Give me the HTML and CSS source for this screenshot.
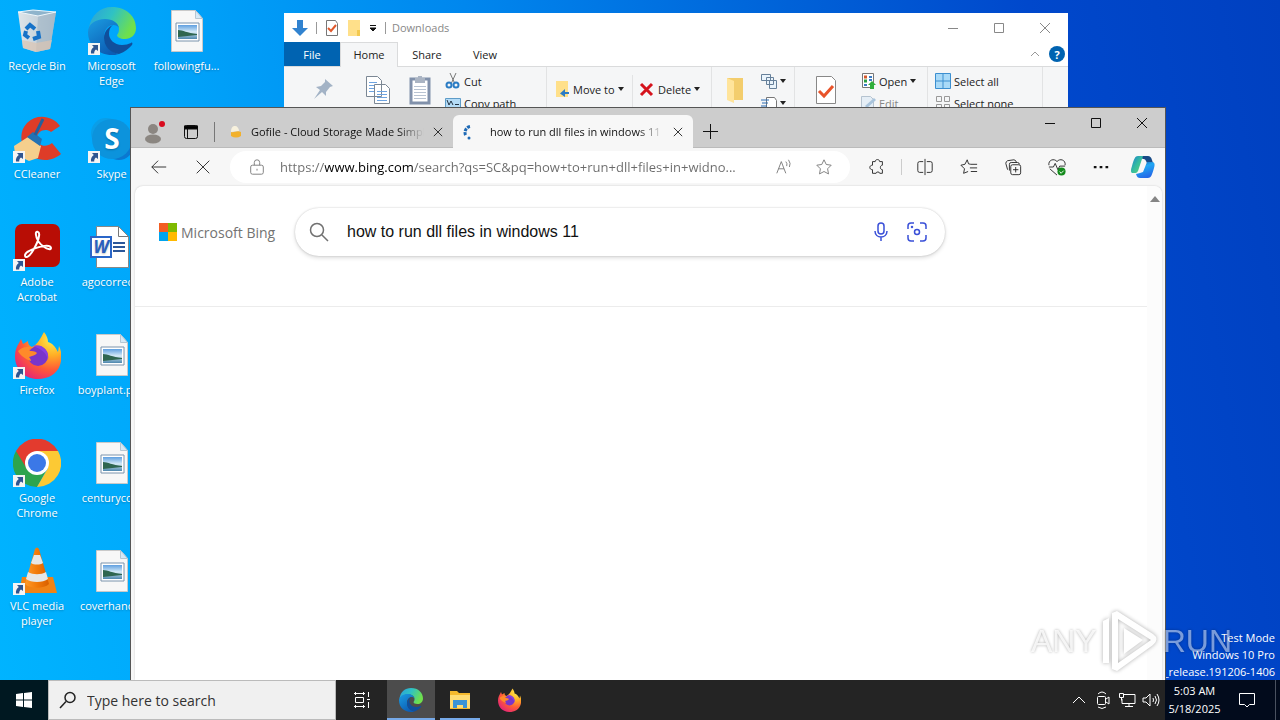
FILE: index.html
```
<!DOCTYPE html>
<html lang="en">
<head>
    <meta charset="utf-8">
    <meta name="viewport" content="width=device-width, initial-scale=1.0">
    <title>Desktop</title>
    <link rel="stylesheet" href="styles.css">
</head>
<body>
    <!-- Shared icons -->
    <svg class="defs" aria-hidden="true">
        <defs>
            <linearGradient id="edge-top" x1="0" y1="0" x2="1" y2="0.4">
                <stop offset="0" stop-color="#2b9fdc"/><stop offset="0.5" stop-color="#2fc2c4"/><stop offset="1" stop-color="#6fe04c"/>
            </linearGradient>
            <linearGradient id="edge-left" x1="0" y1="0" x2="0.6" y2="1">
                <stop offset="0" stop-color="#1b9de2"/><stop offset="1" stop-color="#0c5db4"/>
            </linearGradient>
            <radialGradient id="fox" cx="0.8" cy="0.15" r="1">
                <stop offset="0" stop-color="#fff04f"/><stop offset="0.35" stop-color="#ffae25"/><stop offset="0.65" stop-color="#ff5b36"/><stop offset="1" stop-color="#e3207c"/>
            </radialGradient>
            <linearGradient id="cone" x1="0" y1="0" x2="1" y2="0">
                <stop offset="0" stop-color="#ff9a2a"/><stop offset="0.5" stop-color="#f27a0a"/><stop offset="1" stop-color="#d85f00"/>
            </linearGradient>
            <linearGradient id="photo" x1="0" y1="0" x2="0" y2="1">
                <stop offset="0" stop-color="#5f9fe0"/><stop offset="0.5" stop-color="#d6ebf7"/><stop offset="1" stop-color="#4d86ad"/>
            </linearGradient>
            <linearGradient id="bin" x1="0" y1="0" x2="1" y2="0">
                <stop offset="0" stop-color="#dfe5e9"/><stop offset="1" stop-color="#b3c3cf"/>
            </linearGradient>
            <linearGradient id="copilot-a" x1="0" y1="0" x2="1" y2="1">
                <stop offset="0" stop-color="#1a7fd0"/><stop offset="0.5" stop-color="#35bda0"/><stop offset="1" stop-color="#63d36e"/>
            </linearGradient>
            <linearGradient id="copilot-b" x1="0" y1="0" x2="0.4" y2="1">
                <stop offset="0" stop-color="#1556a8"/><stop offset="0.4" stop-color="#20a8f4"/><stop offset="1" stop-color="#246be8"/>
            </linearGradient>
        </defs>
        <symbol id="shortcut" viewBox="0 0 12 12">
            <path d="M0 0h12v12H0z" fill="#f4f4f4"/>
            <path d="M4 2h6v6L8 6.4C6.6 7.300 6.200 8.600 6.200 10.500H3C2.600 7.500 3.700 5.400 5.800 4z" fill="#2f5590"/>
        </symbol>
        <symbol id="edge" viewBox="0 0 48 48">
            <path d="M1 21C3 8 12 0 24 0c15 0 24 10 24 21 0 7-5 11-11 11-5 0-8-2-8-4 1-1 2-3 2-6 0-5-5-9-12-9C10 13 4 17 1 21z" fill="url(#edge-top)"/>
            <path d="M0 25c0-8 8-13 17-13 8 0 13 4 14 9-1-2-3-3-6-3-5 0-9 5-9 12 0 8 6 15 15 17-3 1-5 1-7 1C10 48 0 38 0 25z" fill="url(#edge-left)"/>
            <path d="M25 18c-5 2-9 7-9 13 0 8 6 15 15 16 6-2 10-6 13-9 1-2 0-3-1-2-3 1-5 2-9 2-8 0-13-6-13-11 0-4 1-7 4-9z" fill="#104f9c"/>
        </symbol>
        <symbol id="firefox" viewBox="0 0 48 48">
            <path d="M31 1c3 4 4 7 4 10 4 1 7 4 10 10l1-6c3 6 3 13 1 19-3 9-12 14-22 14C11 48 2 38 2 25c0-6 2-10 4-13l2-4 2 5 5-3c0 3 1 5 4 6 6-3 8-8 12-15z" fill="url(#fox)"/>
            <circle cx="25" cy="25" r="10" fill="#7a35c9"/>
            <path d="M5 20c5-5 9-4 14-4-3 1-3 3-3 4 3 0 6 0 8 2-2 3-6 3-8 4 1 1 2 3 2 4-6-2-11-6-13-10z" fill="#ff8a2a"/>
            <path d="M20 15c8-3 17 4 15 14-2-8-7-11-15-14z" fill="#8a3fe0"/>
        </symbol>
        <symbol id="picture" viewBox="0 0 48 48">
            <path d="M8.500 3.500h24l7 8v33h-31z" fill="#f7f7f7" stroke="#c9c9c9"/>
            <path d="M32.500 3.500v8h7z" fill="#d5e9f7" stroke="#b5c6d2"/>
            <path d="M13 16h23v18H13z" fill="#fff" stroke="#7a93ac"/>
            <path d="M15 18h19v14H15z" fill="url(#photo)"/>
            <path d="M15 23c5 0 9 3 19 4v1l-19 2z" fill="#2f6650"/>
        </symbol>
        <symbol id="close" viewBox="0 0 12 12">
            <path d="M1 1l10 10M11 1L1 11" fill="none" stroke="currentColor"/>
        </symbol>
        <symbol id="maximize" viewBox="0 0 12 12">
            <path d="M1.500 1.500h9v9h-9z" fill="none" stroke="currentColor"/>
        </symbol>
        <symbol id="minimize" viewBox="0 0 12 12">
            <path d="M1 6.500h10" fill="none" stroke="currentColor"/>
        </symbol>
    </svg>

    <div class="screen">
        <main class="desktop">
            <div class="icons">
                <a href="#" class="icon">
                    <span class="picture"><svg viewBox="0 0 48 48">
                        <path d="M5 5l38 0-6 37-14 3-13-4z" fill="url(#bin)"/>
                        <path d="M25 9l18-4-6 37-14 3z" fill="#9fb4c4" opacity="0.600"/>
                        <path d="M5 5l15-2 23 2-18 4z" fill="#8fb4cc" stroke="#eef6fb"/>
                        <path d="M9 33l14 3 16-3-2 9-14 3-13-4z" fill="#dcc4b2" opacity="0.700"/>
                        <path d="M13 22l4-4 5 4M25 24l1 6-6 2M16 31l-4-3 1-4" fill="none" stroke="#1672c8" stroke-width="4"/>
                    </svg></span>
                    <span class="name">Recycle Bin</span>
                </a>
                <a href="#" class="icon">
                    <span class="picture"><svg><use href="#edge"/></svg><svg class="shortcut"><use href="#shortcut"/></svg></span>
                    <span class="name">Microsoft Edge</span>
                </a>
                <a href="#" class="icon">
                    <span class="picture"><svg><use href="#picture"/></svg></span>
                    <span class="name">followingfu...</span>
                </a>

                <a href="#" class="icon">
                    <span class="picture"><svg viewBox="0 0 48 48">
                        <path d="M47 11C40 1 24-2 14 8S8 36 20 42s22 2 28-3L39 28c-6 5-14 3-15-4s8-12 14-7z" fill="#de3c28"/>
                        <path d="M1 31l14-9 13 9-3 12-9 3-14-7z" fill="#f5cf8d"/>
                        <path d="M14 22l6-5 9 7-2 7z" fill="#2272b4"/>
                        <path d="M22 20l8-16" stroke="#24609c" stroke-width="3"/>
                    </svg><svg class="shortcut"><use href="#shortcut"/></svg></span>
                    <span class="name">CCleaner</span>
                </a>
                <a href="#" class="icon">
                    <span class="picture"><svg viewBox="0 0 48 48">
                        <circle cx="18" cy="18" r="15" fill="#0a9ee8"/>
                        <circle cx="31" cy="31" r="14" fill="#0b78d0"/>
                        <circle cx="24" cy="24" r="20" fill="#0c93dc"/>
                        <text x="24" y="34" class="skype-s">S</text>
                    </svg><svg class="shortcut"><use href="#shortcut"/></svg></span>
                    <span class="name">Skype</span>
                </a>
                <span></span>

                <a href="#" class="icon">
                    <span class="picture"><svg viewBox="0 0 48 48">
                        <rect x="2" y="1" width="45" height="43" rx="7" fill="#b80d05"/>
                        <path d="M12 32c1-5 25-13 26-7 0 4-14-3-15-13-1-5 4-4 3 1-1 7-9 22-13 21-1 0-1-1-1-2z" fill="none" stroke="#fff" stroke-width="2"/>
                    </svg><svg class="shortcut"><use href="#shortcut"/></svg></span>
                    <span class="name">Adobe Acrobat</span>
                </a>
                <a href="#" class="icon">
                    <span class="picture"><svg viewBox="0 0 48 48">
                        <path d="M8.500 3.500h22l10 10v31h-32z" fill="#fff" stroke="#888"/>
                        <path d="M30.500 3.500v10h10" fill="none" stroke="#777"/>
                        <path d="M25 20h12M25 24h12M25 28h12" stroke="#2b579a" stroke-width="2"/>
                        <path d="M3 14h20v20H3z" fill="#fff" stroke="#2a66c8" stroke-width="2"/>
                        <text x="13" y="30" class="word-w">W</text>
                    </svg></span>
                    <span class="name">agocorrec...</span>
                </a>
                <span></span>

                <a href="#" class="icon">
                    <span class="picture"><svg><use href="#firefox"/></svg><svg class="shortcut"><use href="#shortcut"/></svg></span>
                    <span class="name">Firefox</span>
                </a>
                <a href="#" class="icon">
                    <span class="picture"><svg><use href="#picture"/></svg></span>
                    <span class="name">boyplant.png</span>
                </a>
                <span></span>

                <a href="#" class="icon">
                    <span class="picture"><svg viewBox="0 0 48 48">
                        <path d="M24 24L3 12a24 24 0 0 0 21 36l10-18z" fill="#2da44e"/>
                        <path d="M24 12h21a24 24 0 0 1-21 36l11-19z" fill="#fcc934"/>
                        <path d="M3 12a24 24 0 0 1 42 0H24L14 30z" fill="#e33b2e"/>
                        <circle cx="24" cy="24" r="12" fill="#fff"/>
                        <circle cx="24" cy="24" r="9" fill="#3b78e7"/>
                    </svg><svg class="shortcut"><use href="#shortcut"/></svg></span>
                    <span class="name">Google Chrome</span>
                </a>
                <a href="#" class="icon">
                    <span class="picture"><svg><use href="#picture"/></svg></span>
                    <span class="name">centuryco...</span>
                </a>
                <span></span>

                <a href="#" class="icon">
                    <span class="picture"><svg viewBox="0 0 48 48">
                        <path d="M9 30h31l4 16H6z" fill="#f08316"/>
                        <path d="M22 2q2-3 4 0l10 35c-5 5-19 5-24 0z" fill="url(#cone)"/>
                        <path d="M21 8h6l3 8c-3 2-9 2-12 0zM15 25c5 3 13 3 18 0l2 7c-5 4-17 4-22 0z" fill="#e6e6e6"/>
                    </svg><svg class="shortcut"><use href="#shortcut"/></svg></span>
                    <span class="name">VLC media player</span>
                </a>
                <a href="#" class="icon">
                    <span class="picture"><svg><use href="#picture"/></svg></span>
                    <span class="name">coverhand...</span>
                </a>
            </div>

            <div class="build">
                Test Mode<br>
                Windows 10 Pro<br>
                Build 19041.vb_release.191206-1406
            </div>

            <!-- File explorer -->
            <section class="window explorer">
                <header class="explorer-title">
                    <svg width="16" height="18" viewBox="0 0 16 18"><path d="M5 1h6v8h5l-8 8-8-8h5z" fill="#3183d0"/></svg>
                    <i class="rule"></i>
                    <svg class="check-doc" width="14" height="18" viewBox="0 0 14 18"><path d="M1.500 1.500h9l2 3v12h-11z" fill="#fff" stroke="#777"/><path d="M3 9l3 3 5-6" fill="none" stroke="#e0592c" stroke-width="2"/></svg>
                    <svg width="14" height="18" viewBox="0 0 14 18"><path d="M1 1h12v16H1z" fill="#ffe08a"/><path d="M10 11h3v6h-3z" fill="#f3c94f"/></svg>
                    <svg width="8" height="8" viewBox="0 0 8 8"><path d="M1 1.500h6M1 4l3 3 3-3z" stroke="#111" fill="#111"/></svg>
                    <i class="rule"></i>
                    <span class="caption">Downloads</span>
                    <div class="controls">
                        <button aria-label="Minimize"><svg><use href="#minimize"/></svg></button>
                        <button aria-label="Maximize"><svg><use href="#maximize"/></svg></button>
                        <button aria-label="Close"><svg><use href="#close"/></svg></button>
                    </div>
                </header>
                <nav class="ribbon-tabs">
                    <button class="file">File</button>
                    <button class="current">Home</button>
                    <button>Share</button>
                    <button>View</button>
                    <span class="ribbon-help">
                        <svg width="10" height="6" viewBox="0 0 10 6"><path d="M1 5l4-4 4 4" fill="none" stroke="#999"/></svg>
                        <button class="help" aria-label="Help">?</button>
                    </span>
                </nav>
                <div class="ribbon">
                    <div class="group clipboard">
                        <svg width="24" height="26" viewBox="0 0 24 26"><path d="M14 4l8 7-3 1-4 5 0 4-4-4-8 7 6-9-4-3 5-1 4-4z" fill="#a3b3c6"/></svg>
                        <svg class="copy" width="26" height="30" viewBox="0 0 26 30"><path d="M1.500 1.500h11l4 4v16h-15zM9.500 9.500h11l4 4v15h-15z" fill="#fff" stroke="#7b8794"/><path d="M4 7.500h8M4 10.500h5M4 13.500h5M4 16.500h5M12 16.500h10M12 19.500h10M12 22.500h10M12 25.500h10" stroke="#6ea3e0"/></svg>
                        <svg width="22" height="30" viewBox="0 0 22 30"><path d="M2 4h18v24H2z" fill="#fff" stroke="#8191ab" stroke-width="3"/><path d="M6 3h3V1h4v2h3v5H6z" fill="#aab4c3"/><path d="M5 11.500h12M5 14.500h12M5 17.500h12M5 20.500h12M5 23.500h12" stroke="#b8c3d2"/></svg>
                        <div class="stack">
                            <button><svg viewBox="0 0 16 16"><path d="M5 0l5 11M11 0L6 11" stroke="#777" fill="none"/><circle cx="4" cy="12" r="2.500" fill="none" stroke="#2b7cc4" stroke-width="2"/><circle cx="11" cy="12" r="2.500" fill="none" stroke="#2b7cc4" stroke-width="2"/></svg>Cut</button>
                            <button><svg viewBox="0 0 16 16"><path d="M.500 3.500h15v9H.500z" fill="#b5dcf7" stroke="#5e9cc8"/><path d="M2 5l2 5 2-4 2 4M10 9.500h4" fill="none" stroke="#234"/></svg>Copy path</button>
                        </div>
                    </div>
                    <div class="group organize">
                        <button class="drop"><svg viewBox="0 0 16 16"><path d="M2 0h12v16H2z" fill="#ffe08a"/><path d="M15 11h-4V8l-5 4.500 5 3.500v-3h4z" fill="#2b7cc4"/></svg>Move to</button>
                        <i class="rule"></i>
                        <button class="drop"><svg viewBox="0 0 16 16"><path d="M2 3l11 11M13 3L2 14" stroke="#d5131c" stroke-width="3"/></svg>Delete</button>
                    </div>
                    <div class="group new">
                        <svg width="22" height="30" viewBox="0 0 22 30"><path d="M3 3h16v22H3z" fill="#f3cd6d"/><path d="M3 3l7 3v22l-7-3z" fill="#ffe49b"/></svg>
                        <div class="stack">
                            <button class="drop" aria-label="New item"><svg viewBox="0 0 16 16"><path d="M.500 1.500h9v6h-9zM5.500 4.500h7v7h-7zM8.500 7.500h7v8h-7z" fill="#eaf4fc" stroke="#66809a"/></svg></button>
                            <button class="drop" aria-label="Easy access"><svg viewBox="0 0 16 16"><path d="M5.500 2.500h8l2 3v12h-10z" fill="#fff" stroke="#777"/><path d="M0 5h8M1 8h6M0 11h6" stroke="#2b6cb4"/></svg></button>
                        </div>
                    </div>
                    <div class="group open">
                        <svg width="22" height="30" viewBox="0 0 22 30"><path d="M1.500 1.500h15l4 4v23h-19z" fill="#fff" stroke="#888"/><path d="M4 16l5 5 9-10" fill="none" stroke="#e8532a" stroke-width="3"/></svg>
                        <div class="stack">
                            <button class="drop"><svg viewBox="0 0 16 16"><path d="M2.500.500h11v14h-11z" fill="#fff" stroke="#777"/><path d="M4 4h3" stroke="#d4582c" stroke-width="3"/><path d="M4 8h3" stroke="#2b9f42" stroke-width="3"/><path d="M4 12h3M9 4h3M9 7h3" stroke="#3c7cc4" stroke-width="2"/><path d="M12 8l4 4h-2v4h-4v-4H8z" fill="#2fae3b"/></svg>Open</button>
                            <button class="disabled"><svg viewBox="0 0 16 16"><path d="M1.500 1.500h9l3 3v11h-12z" fill="#e5eef6" stroke="#b5c3d0"/><path d="M6 12l9-8" stroke="#a9c4dc" stroke-width="3"/></svg>Edit</button>
                        </div>
                    </div>
                    <div class="group select">
                        <div class="stack">
                            <button><svg viewBox="0 0 16 16"><path d="M.500.500h15v15H.500zM8 0v16M0 8h16" fill="#a9daf8" stroke="#3c8fd0"/></svg>Select all</button>
                            <button><svg viewBox="0 0 16 16"><path d="M1.500 1.500h5v5h-5zM9.500 1.500h5v5h-5zM1.500 9.500h5v5h-5zM9.500 9.500h5v5h-5z" fill="none" stroke="#999"/></svg>Select none</button>
                        </div>
                    </div>
                </div>
            </section>

            <!-- Browser -->
            <section class="window browser">
                <header class="tab-bar">
                    <svg class="profile" width="26" height="26" viewBox="0 0 26 26"><circle cx="11" cy="9" r="5" fill="#8b8681"/><ellipse cx="11" cy="19" rx="8" ry="4.500" fill="#8b8681"/><circle cx="20" cy="4" r="3" fill="#d80b1e"/></svg>
                    <svg class="tab-menu" width="14" height="14" viewBox="0 0 14 14"><rect x="0.500" y="0.500" width="13" height="13" rx="2" fill="none" stroke="#111"/><path d="M0 1h14v3H0zM3.500 4v9" stroke="#111"/></svg>
                    <i class="rule"></i>
                    <div class="tab">
                        <svg width="14" height="16" viewBox="0 0 14 16"><path d="M2 8c0-5 2-6 4-6s4 2 4 5z" fill="#f7f1dd"/><path d="M2 8c3 1 6-2 10 0v4q-5 3-10 0z" fill="#f2b12c"/></svg>
                        <span class="tab-name">Gofile - Cloud Storage Made Simple</span>
                        <button aria-label="Close tab"><svg><use href="#close"/></svg></button>
                    </div>
                    <div class="tab current">
                        <svg width="16" height="16" viewBox="0 0 16 16"><path d="M8 2.500C3 3.500 2 9 4 12" fill="none" stroke="#1f6ab5" stroke-width="3" stroke-dasharray="3 1"/><circle cx="7" cy="14" r="1.500" fill="#1f6ab5"/></svg>
                        <span class="tab-name">how to run dll files in windows 11 - Search</span>
                        <button aria-label="Close tab"><svg><use href="#close"/></svg></button>
                    </div>
                    <button class="new-tab" aria-label="New tab"><svg width="15" height="15" viewBox="0 0 15 15"><path d="M7.500 0v15M0 7.500h15" stroke="#111"/></svg></button>
                    <div class="controls">
                        <button aria-label="Minimize"><svg><use href="#minimize"/></svg></button>
                        <button aria-label="Maximize"><svg><use href="#maximize"/></svg></button>
                        <button aria-label="Close"><svg><use href="#close"/></svg></button>
                    </div>
                </header>

                <div class="toolbar">
                    <button aria-label="Back"><svg viewBox="0 0 20 20"><path d="M18 10H2M9 3l-7 7 7 7" /></svg></button>
                    <button aria-label="Stop"><svg viewBox="0 0 20 20"><path d="M3 3l14 14M17 3L3 17"/></svg></button>
                    <div class="address">
                        <svg viewBox="0 0 20 20"><rect x="3" y="8" width="14" height="10" rx="2"/><path d="M7 8V5a3 3 0 0 1 6 0v3M10 12v2"/></svg>
                        <input type="text" aria-label="Address" value="https://www.bing.com/search?qs=SC&amp;pq=how+to+run+dll+files+in+widno...">
                        <button aria-label="Read aloud"><svg viewBox="0 0 20 20"><path d="M2 17L7 4l5 13M4 12h6M12 4q2 2 1 5M15 2q3 4 1 8"/></svg></button>
                        <button aria-label="Favorite"><svg viewBox="0 0 20 20"><path d="M10 2l2.500 5.200 5.500.8-4 4 1 5.700-5-2.700-5 2.700 1-5.700-4-4 5.500-.8z"/></svg></button>
                    </div>
                    <button aria-label="Extensions"><svg viewBox="0 0 20 20"><path d="M5 4h3c0-3 5-3 5 0h3v4c-3 0-3 5 0 5v4h-3c0-2-4-2-4 0H5v-4c-4 0-4-5 0-5z"/></svg></button>
                    <i class="rule"></i>
                    <button aria-label="Split screen"><svg viewBox="0 0 20 20"><path d="M8 4H4a2 2 0 0 0-2 2v8a2 2 0 0 0 2 2h4M12 4h4a2 2 0 0 1 2 2v8a2 2 0 0 1-2 2h-4M10 1v18"/></svg></button>
                    <button aria-label="Favorites"><svg viewBox="0 0 20 20"><path d="M12 7L9.500 6.500 8 2 5.500 7 1 8l4 4-1 5 5-2M12 7h7M11 11h8M12 15h7"/></svg></button>
                    <button aria-label="Collections"><svg viewBox="0 0 20 20"><path d="M4 13L2 6q0-2 2-3l7-1q2 0 3 3"/><path d="M6 14V7q0-2 2-2h7q2 0 2 2"/><rect x="7.500" y="7.500" width="11" height="11" rx="2"/><path d="M13 10v6M10 13h6"/></svg></button>
                    <button aria-label="Browser essentials"><svg viewBox="0 0 20 20"><path d="M1 8C0 2 7 0 10 4c3-4 10-2 9 4M1 10h5l2-4 3 7 2-4h6M2 12l8 7"/><circle class="ok" cx="15" cy="15" r="4.500"/><path class="tick" d="M13 15l1.500 2 3-3"/></svg></button>
                    <button aria-label="More"><svg viewBox="0 0 20 20"><path class="dots" d="M2 9h3v2.500H2zM8.500 9h3v2.500h-3zM15 9h3v2.500h-3z"/></svg></button>
                    <button class="copilot" aria-label="Copilot"><svg viewBox="0 0 24 24"><path d="M7 1h10c2 0 3 1 4 4l1 3h-6l-1-2c-1-2-2-2-3-2z" fill="#174a86" stroke="none"/><path d="M7 1h5l-4 12c-1 4-2 5-4 5H2c-3 0-2-4-1-7C3 4 4 1 7 1z" fill="url(#copilot-a)"/><path d="M17 23H9c-2 0-3-1-4-4l4-1 3-1 4-10h5c3 0 3 3 2 6-2 7-3 10-6 10z" fill="url(#copilot-b)"/></svg></button>
                </div>

                <div class="page">
                    <div class="bing">
                        <header class="bing-header">
                            <a href="#" class="bing-logo">
                                <svg width="18" height="18" viewBox="0 0 18 18"><path d="M0 0h9v9H0z" fill="#f25d22"/><path d="M9 0h9v9H9z" fill="#7fba00"/><path d="M0 9h9v9H0z" fill="#00a4ef"/><path d="M9 9h9v9H9z" fill="#ffb900"/></svg>
                                Microsoft Bing
                            </a>
                            <form class="search">
                                <svg width="20" height="20" viewBox="0 0 20 20"><path d="M13 13l6 6" stroke="#717171" stroke-width="1.500"/><circle cx="8" cy="8" r="6.500" fill="none" stroke="#717171" stroke-width="1.500"/></svg>
                                <input type="text" aria-label="Search" value="how to run dll files in windows 11">
                                <button type="button" aria-label="Search by voice"><svg viewBox="0 0 20 20"><rect x="7" y="1" width="6" height="11" rx="3"/><path d="M4 9c0 8 12 8 12 0M10 15v4"/></svg></button>
                                <button type="button" aria-label="Search by image"><svg viewBox="0 0 20 20"><path d="M1 7V4q0-3 3-3h3M13 1h3q3 0 3 3v3M19 13v3q0 3-3 3h-3M7 19H4q-3 0-3-3v-3"/><circle cx="10" cy="10" r="2.500"/><circle cx="5" cy="5" r="0.500"/></svg></button>
                            </form>
                        </header>
                    </div>
                    <div class="scrollbar"><svg width="10" height="6" viewBox="0 0 10 6"><path d="M5 0l5 6H0z" fill="#858585"/></svg></div>
                </div>
            </section>

            <div class="watermark">
                <span>ANY</span>
                <svg width="60" height="64" viewBox="0 0 60 64"><path d="M3 54V12l6-3v45zM12 4l5-2 36 23q7 5 0 11L17 62l-5-2zM18 10v44l33-23zM24 19l19 12-19 14z"/></svg>
                <span>RUN</span>
            </div>
        </main>

        <footer class="taskbar">
            <button class="start" aria-label="Start"><svg width="16" height="16" viewBox="0 0 16 16"><path d="M0 2l7-1v6.500H0zM8 1l8-1v7.500H8zM0 8.500h7V15l-7-1zM8 8.500h8V16l-8-1z" fill="#fff"/></svg></button>
            <label class="task-search">
                <svg width="18" height="18" viewBox="0 0 18 18"><circle cx="11" cy="6.500" r="5" fill="none" stroke="#222" stroke-width="1.500"/><path d="M7 10.500L1 17" stroke="#222" stroke-width="1.500"/></svg>
                <input type="text" placeholder="Type here to search" aria-label="Type here to search">
            </label>
            <div class="apps">
                <button aria-label="Task view"><svg width="16" height="16" viewBox="0 0 16 16"><path d="M0 1.500h11M0 14.500h11M1.500 0v3M9.500 0v3M1.500 13v3M9.500 13v3M1.500 5.500h8v5h-8zM14.500 0v5M14.500 10v6M13 7.500h3" fill="none" stroke="#fff"/></svg></button>
                <button class="active" aria-label="Microsoft Edge"><svg width="24" height="24"><use href="#edge"/></svg></button>
                <button class="open" aria-label="File Explorer"><svg width="22" height="20" viewBox="0 0 22 20"><path d="M1 1h7l2 2h11v16H1z" fill="#f5b92e"/><path d="M1 5h20v13H1z" fill="#ffdc74"/><path d="M4 18v-8h14v8h-4v-3H8v3z" fill="#3a93d6"/></svg></button>
                <button aria-label="Firefox"><svg width="24" height="24"><use href="#firefox"/></svg></button>
            </div>
            <div class="tray">
                <svg viewBox="0 0 20 20"><path d="M4 13l6-6 6 6"/></svg>
                <svg viewBox="0 0 20 20"><rect x="4.500" y="6.500" width="8" height="8" rx="1"/><path d="M13 9l3-2v7l-3-2M5 4q4-4 8 0M5 17q4 3 8 0"/></svg>
                <svg viewBox="0 0 20 20"><path d="M7 4.500h11v9H5V9M2.500 3.500h4v4h-4zM4.500 7.500v3M12 13.500v3M8 16.500h8"/></svg>
                <svg viewBox="0 0 20 20"><path d="M2 8h3l4-4v12l-4-4H2zM12 8q1 2 0 4M14 6q3 4 0 8M16 4q4 6 0 12"/></svg>
            </div>
            <div class="clock">
                <time>5:03 AM<br>5/18/2025</time>
                <button aria-label="Notifications"><svg width="18" height="18" viewBox="0 0 18 18"><path d="M1.500 2.500h15v11h-5L9 16l-2.500-2.500h-5z" fill="none" stroke="#fff"/></svg></button>
                <i class="peek"></i>
            </div>
        </footer>
    </div>
</body>
</html>
```
FILE: styles.css
```
/* Basic page setup */
* {
    box-sizing: border-box;
}

body {
    margin: 0;
    font-family: "Open Sans", "Noto Sans", sans-serif;
    font-size: 11px;
    color: #222;
}

button, input {
    font: inherit;
    color: inherit;
    background: none;
    border: none;
    padding: 0;
    margin: 0;
    outline: none;
}

button {
    display: flex;
    align-items: center;
    justify-content: center;
}

a {
    color: inherit;
    text-decoration: none;
}

svg {
    display: block;
    flex: none;
}

.defs {
    position: absolute;
    width: 0;
    height: 0;
}

.screen {
    display: flex;
    flex-direction: column;
    height: 100vh;
    overflow: hidden;
    background: linear-gradient(80deg, #00b4ff 0%, #00a4fa 20%, #0087ee 42%, #0062d8 65%, #0048cc 82%, #0040c0 100%);
}

/* Desktop */
.desktop {
    flex: 1;
    position: relative;
    overflow: hidden;
}

.icons {
    display: grid;
    grid-template-columns: 74px 75px 75px;
    grid-auto-rows: 108px;
}

.icon {
    display: flex;
    flex-direction: column;
    align-items: center;
    gap: 3px;
    padding-top: 7px;
    color: white;
    text-align: center;
    line-height: 15px;
    text-shadow: 0 1px 2px #0004;
}

.picture {
    position: relative;
}

.picture svg {
    width: 48px;
    height: 48px;
}

.picture .shortcut {
    position: absolute;
    left: 0;
    bottom: 0;
    width: 12px;
    height: 12px;
}

.name {
    padding: 0 4px;
}

.skype-s {
    font-size: 28px;
    font-weight: bold;
    text-anchor: middle;
    fill: white;
}

.word-w {
    font-size: 17px;
    font-weight: bold;
    font-style: italic;
    text-anchor: middle;
    fill: #2a5fbe;
}

.build {
    position: absolute;
    right: 5px;
    bottom: 0;
    color: white;
    text-align: right;
    line-height: 17px;
    white-space: nowrap;
}

/* Windows */
.window {
    position: absolute;
    display: flex;
    flex-direction: column;
}

.rule {
    width: 1px;
    background: #999;
}

.controls {
    display: flex;
    margin-left: auto;
    align-self: flex-start;
}

.controls button {
    width: 46px;
    height: 30px;
}

.controls svg {
    width: 12px;
    height: 12px;
}

/* File explorer */
.explorer {
    top: 13px;
    left: 284px;
    right: 212px;
    height: 400px;
    background: white;
}

.explorer-title {
    display: flex;
    align-items: center;
    height: 29px;
    padding-left: 8px;
    gap: 8px;
    color: #888;
}

.explorer-title .rule {
    height: 12px;
}

.caption {
    margin-left: -2px;
}

.ribbon-tabs {
    display: flex;
    height: 25px;
    border-bottom: 1px solid #dadbdc;
}

.ribbon-tabs > button {
    width: 58px;
}

.ribbon-tabs .file {
    width: 56px;
    background: #0063b1;
    color: white;
}

.ribbon-tabs .current {
    height: 25px;
    padding-bottom: 2px;
    background: #f5f6f7;
    border: 1px solid #dadbdc;
    border-bottom: none;
}

.ribbon-help {
    display: flex;
    align-items: center;
    gap: 9px;
    margin-left: auto;
    padding-right: 3px;
}

.help {
    width: 16px;
    height: 16px;
    border-radius: 50%;
    background: #0063b1;
    color: white;
    font-weight: bold;
}

.ribbon {
    display: flex;
    height: 92px;
    background: #f5f6f7;
}

.group {
    display: flex;
    align-items: flex-start;
    padding-top: 8px;
    border-right: 1px solid #e2e3e4;
}

.group button {
    height: 22px;
    gap: 3px;
    justify-content: flex-start;
    white-space: nowrap;
}

.group button svg {
    width: 16px;
    height: 16px;
}

.stack {
    display: flex;
    flex-direction: column;
    margin-top: -4px;
}

.group .stack button {
    padding-bottom: 2px;
}

.drop::after {
    content: "";
    border: 3px solid transparent;
    border-top: 4px solid #222;
    border-bottom: none;
}

.disabled {
    color: #888;
}

.clipboard {
    width: 263px;
    padding-left: 27px;
}

.clipboard .copy {
    margin: 0 18px 0 30px;
}

.clipboard .stack {
    margin-left: 14px;
}

.organize {
    width: 165px;
    padding-left: 7px;
}

.group.organize button {
    margin-top: 3px;
    width: 72px;
}

.organize .rule {
    height: 34px;
    margin: 0 6px;
    background: #e2e3e4;
}

.new {
    width: 83px;
    gap: 15px;
    padding-left: 12px;
}

.group.open {
    width: 133px;
    gap: 23px;
    padding-left: 20px;
}

.select {
    width: 115px;
    padding-left: 7px;
}

/* Browser */
.browser {
    top: 107px;
    left: 130px;
    right: 114px;
    bottom: 0;
    background: #f7f7f7;
    border: 1px solid #555;
    border-bottom: none;
}

.tab-bar {
    display: flex;
    height: 40px;
    background: #cdcdcd;
    border-bottom: 1px solid #bbb;
    color: #111;
}

.profile {
    margin: 12px 14px 0 11px;
}

.tab-menu {
    margin: 17px 16px 0 2px;
}

.tab-bar .rule {
    height: 20px;
    margin-top: 14px;
    background: #777;
}

.tab {
    display: flex;
    align-items: center;
    width: 238px;
    height: 33px;
    margin-top: 7px;
    padding: 0 6px 0 14px;
}

.tab-name {
    flex: 1;
    overflow: hidden;
    margin: 0 5px 0 8px;
    white-space: nowrap;
    mask-image: linear-gradient(90deg, #000 85%, transparent);
}

.tab button {
    width: 18px;
    height: 18px;
}

.tab button svg {
    width: 10px;
    height: 10px;
}

.tab.current {
    width: 240px;
    padding-left: 9px;
    background: #f7f7f7;
    border-radius: 6px 6px 0 0;
}

.tab.current .tab-name {
    margin-left: 12px;
}

.new-tab {
    width: 34px;
    height: 33px;
    margin-top: 7px;
}

.toolbar {
    display: flex;
    align-items: center;
    height: 38px;
    padding: 0 2px 0 6px;
}

.toolbar button {
    width: 44px;
    height: 30px;
}

.toolbar svg {
    width: 18px;
    height: 18px;
    fill: none;
    stroke: #222;
}

.toolbar > .rule {
    height: 16px;
    margin: 0 1px 0 2px;
    background: #ccc;
}

.address {
    display: flex;
    flex: 1;
    align-items: center;
    height: 32px;
    margin: 0 5px;
    padding: 0 6px 0 18px;
    border-radius: 16px;
    background: white;
}

.address svg {
    stroke: #777;
}

.address input {
    flex: 1;
    min-width: 0;
    margin-left: 14px;
    font-size: 13px;
    /* host name is darker than the rest of the address */
    color: transparent;
    background: linear-gradient(90deg, #6b6b6b 45px, #000 45px 133px, #6b6b6b 133px);
    background-clip: text;
}

.address button {
    width: 40px;
}

.toolbar .ok {
    fill: #138a1b;
    stroke: none;
}

.toolbar .tick {
    stroke: white;
}

.toolbar .dots {
    fill: #111;
    stroke: none;
}

.toolbar .copilot {
    width: 40px;
}

.copilot svg {
    width: 24px;
    height: 24px;
    stroke: none;
}

.page {
    display: flex;
    flex: 1;
    margin: 0 3px 0 4px;
    background: white;
    border-radius: 8px 8px 0 0;
    box-shadow: 0 0 2px #0003;
}

.bing {
    flex: 1;
}

.bing-header {
    display: flex;
    height: 121px;
    padding: 22px 24px 0;
    gap: 20px;
    border-bottom: 1px solid #ececec;
}

.bing-logo {
    display: flex;
    align-items: center;
    gap: 4px;
    width: 116px;
    height: 48px;
    color: #737373;
    font-size: 14px;
    font-weight: 500;
    white-space: nowrap;
}

.search {
    display: flex;
    align-items: center;
    flex: 0 1 650px;
    height: 48px;
    padding: 0 10px 0 14px;
    border-radius: 24px;
    box-shadow: 0 0 2px #0003, 0 2px 4px #0002;
}

.search input {
    flex: 1;
    margin-left: 18px;
    font-family: "Liberation Sans", Arial, sans-serif;
    font-size: 16px;
    color: #111;
}

.search button {
    width: 36px;
    height: 36px;
}

.search button svg {
    width: 20px;
    height: 20px;
    fill: none;
    stroke: #3a50d8;
    stroke-width: 1.5;
}

.scrollbar {
    display: flex;
    justify-content: center;
    width: 15px;
    padding-top: 10px;
    background: #fcfcfc;
    border-radius: 0 8px 0 0;
}

/* Watermark */
.watermark {
    position: absolute;
    right: 48px;
    bottom: 7px;
    display: flex;
    align-items: center;
    gap: 3px;
    font-family: "Liberation Sans", Arial, sans-serif;
    font-size: 32px;
    color: #fffc;
    text-shadow: 0 0 3px #0008;
    opacity: 0.6;
    pointer-events: none;
}

.watermark svg {
    fill: white;
    fill-rule: evenodd;
    filter: drop-shadow(0 0 2px #0008);
}

/* Taskbar */
.taskbar {
    display: flex;
    height: 40px;
    color: white;
    background: #242424;
}

.start {
    width: 48px;
    background: #001821;
}

.task-search {
    display: flex;
    align-items: center;
    gap: 10px;
    width: 288px;
    padding-left: 10px;
    background: #f0f0f0;
    border: 1px solid #bbb;
    color: #333;
}

.task-search input {
    flex: 1;
    font-size: 14px;
}

.task-search input::placeholder {
    color: #333;
    opacity: 1;
}

.apps {
    display: flex;
    gap: 1px;
    margin-right: auto;
    padding-left: 2px;
}

.apps button {
    width: 48px;
    border-bottom: 2px solid transparent;
    border-top: 2px solid transparent;
}

.apps .active {
    background: #4c4c4c;
    border-bottom-color: #76a9e8;
}

.apps .open {
    width: 40px;
    margin: 0 4px;
    border-bottom-color: #76a9e8;
}

.tray {
    display: flex;
    align-items: center;
    gap: 4px;
    padding-right: 4px;
}

.tray svg {
    width: 20px;
    height: 20px;
    fill: none;
    stroke: white;
}

.clock {
    display: flex;
    align-items: center;
    width: 115px;
    background: #020b1c;
}

.clock time {
    width: 59px;
    line-height: 18px;
    text-align: center;
}

.clock button {
    width: 46px;
    margin-right: auto;
}

.peek {
    width: 5px;
    height: 40px;
    border-left: 1px solid #4a5260;
}
```
